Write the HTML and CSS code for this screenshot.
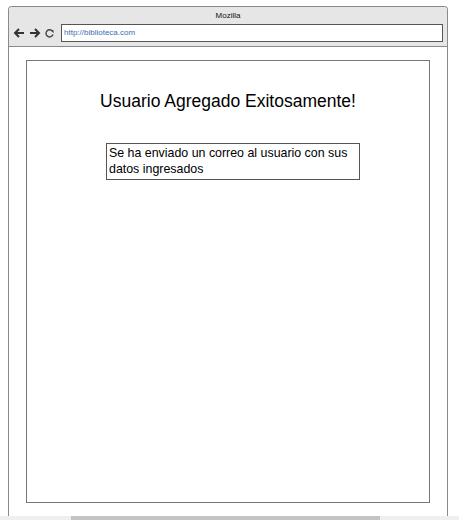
FILE: index.html
```html
<!DOCTYPE html>
<html>
<head>
<meta charset="utf-8">
<link rel="stylesheet" href="styles.css">
</head>
<body>
<div class="frame">
  <div class="chrome">
    <div class="title">Mozilla</div>
    <div class="navrow">
      <svg class="nav" width="44" height="12" viewBox="0 0 44 12">
        <path d="M12 6H3M7 2L3 6L7 10" fill="none" stroke="#333" stroke-width="2"/>
        <path d="M18 6H27M23 2L27 6L23 10" fill="none" stroke="#333" stroke-width="2"/>
        <path d="M40.5 4.2A3.6 3.6 0 1 0 41 7.5" fill="none" stroke="#444" stroke-width="1.4"/>
        <path d="M38.6 3.2L41.6 3.2L41.6 6.2Z" fill="#444"/>
      </svg>
      <div class="url">http://biblioteca.com</div>
    </div>
  </div>
  <div class="content">
    <div class="panel">
      <h1 class="heading">Usuario Agregado Exitosamente!</h1>
      <div class="msg">Se ha enviado un correo al usuario con sus datos ingresados</div>
    </div>
  </div>
</div>
<div class="hscroll"><div class="thumb"></div></div>
</body>
</html>
```

FILE: styles.css
```css
html, body {
  margin: 0;
  padding: 0;
  background: #ffffff;
  font-family: "Liberation Sans", Arial, sans-serif;
}
.frame {
  margin: 6px 0 0 8px;
  width: 438px;
  height: 509px;
  border: 1px solid #8a8a8a;
  border-bottom: none;
  border-radius: 4px 4px 0 0;
  display: flex;
  flex-direction: column;
}
.chrome {
  height: 39px;
  background: #e6e6e6;
  border-bottom: 1px solid #8a8a8a;
  border-radius: 3px 3px 0 0;
  display: flex;
  flex-direction: column;
}
.title {
  font-size: 8px;
  color: #111;
  text-align: center;
  padding-top: 4px;
  height: 13px;
}
.navrow {
  display: flex;
  align-items: center;
  padding-left: 3px;
  gap: 5px;
}
.nav {
  display: block;
}
.url {
  width: 378px;
  height: 16px;
  border: 1px solid #555;
  background: #fff;
  font-size: 8px;
  color: #3a6fb0;
  line-height: 16px;
  padding-left: 2px;
  box-sizing: content-box;
}
.content {
  flex: 1;
  padding: 13px 17px 13px 17px;
  display: flex;
}
.panel {
  flex: 1;
  border: 1px solid #777;
  display: flex;
  flex-direction: column;
}
.heading {
  margin: 29px 0 0 0;
  font-weight: normal;
  font-size: 17.5px;
  line-height: 22px;
  text-align: center;
  color: #000;
}
.msg {
  margin: 31px 0 0 79px;
  width: 250px;
  height: 34px;
  border: 1px solid #555;
  padding: 1px 0 0 2px;
  font-size: 12.4px;
  line-height: 16px;
  color: #000;
  box-sizing: content-box;
}
.hscroll {
  height: 5px;
  background: #efefef;
}
.thumb {
  margin-left: 71px;
  width: 309px;
  height: 5px;
  background: #c4c4c4;
}
```
